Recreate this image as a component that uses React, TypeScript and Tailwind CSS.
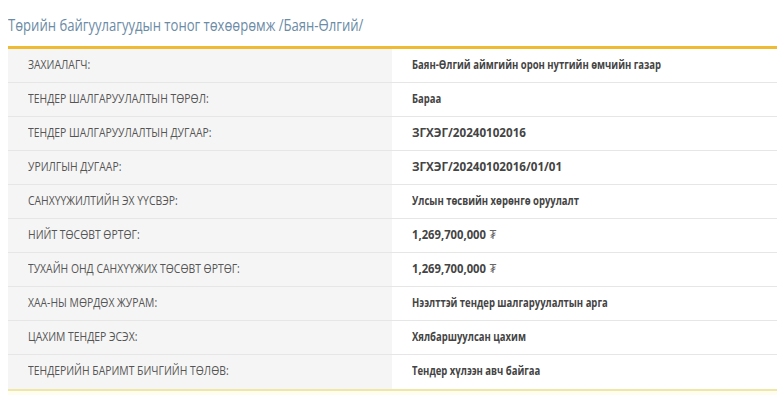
import React from "react";

const rows: [string, string, string][] = [
  ["ЗАХИАЛАГЧ:", "Баян-Өлгий аймгийн орон нутгийн өмчийн газар", "scale-x-[0.76]"],
  ["ТЕНДЕР ШАЛГАРУУЛАЛТЫН ТӨРӨЛ:", "Бараа", "scale-x-[0.76]"],
  ["ТЕНДЕР ШАЛГАРУУЛАЛТЫН ДУГААР:", "ЗГХЭГ/20240102016", "scale-x-[0.93]"],
  ["УРИЛГЫН ДУГААР:", "ЗГХЭГ/20240102016/01/01", "scale-x-[0.93]"],
  ["САНХҮҮЖИЛТИЙН ЭХ ҮҮСВЭР:", "Улсын төсвийн хөрөнгө оруулалт", "scale-x-[0.76]"],
  ["НИЙТ ТӨСӨВТ ӨРТӨГ:", "1,269,700,000", "scale-x-[0.9]"],
  ["ТУХАЙН ОНД САНХҮҮЖИХ ТӨСӨВТ ӨРТӨГ:", "1,269,700,000", "scale-x-[0.9]"],
  ["ХАА-НЫ МӨРДӨХ ЖУРАМ:", "Нээлттэй тендер шалгаруулалтын арга", "scale-x-[0.76]"],
  ["ЦАХИМ ТЕНДЕР ЭСЭХ:", "Хялбаршуулсан цахим", "scale-x-[0.76]"],
  ["ТЕНДЕРИЙН БАРИМТ БИЧГИЙН ТӨЛӨВ:", "Тендер хүлээн авч байгаа", "scale-x-[0.76]"],
];

export default function App() {
  return (
    <div
      className="w-[777px] h-[395px] bg-white overflow-hidden pl-2"
      style={{ fontFamily: '"Open Sans", sans-serif' }}
    >
      <div className="h-[46px] flex items-center pt-[3px]">
        <h1 className="text-[17px] text-[#6b8ba6] leading-none whitespace-nowrap inline-block origin-left scale-x-[0.77]">
          Төрийн байгуулагуудын тоног төхөөрөмж /Баян-Өлгий/
        </h1>
      </div>
      <div className="border-t-[3px] border-[#efbb33]">
        {rows.map(([k, v, sc], i) => (
          <div
            key={i}
            className={`flex h-[34px] ${i < rows.length - 1 ? "border-b border-[#e6e6e6]" : ""}`}
          >
            <div className="w-[384px] bg-[#f5f5f5] flex items-center pl-5 pb-[1px] text-[12.5px] text-[#555]">
              <span className="inline-block whitespace-nowrap origin-left scale-x-[0.83]">{k}</span>
            </div>
            <div className="flex-1 flex items-center pl-5 pb-[1px] text-[12.5px] font-bold text-[#444]">
              <span className={`inline-block whitespace-nowrap origin-left ${sc}`}>
                {v}
                {i === 5 || i === 6 ? <span className="font-normal text-[#666] ml-[4px]">₮</span> : null}
              </span>
            </div>
          </div>
        ))}
      </div>
      <div className="border-t-2 border-[#efe7a8] bg-[#fffdf0] h-[10px]" />
    </div>
  );
}
